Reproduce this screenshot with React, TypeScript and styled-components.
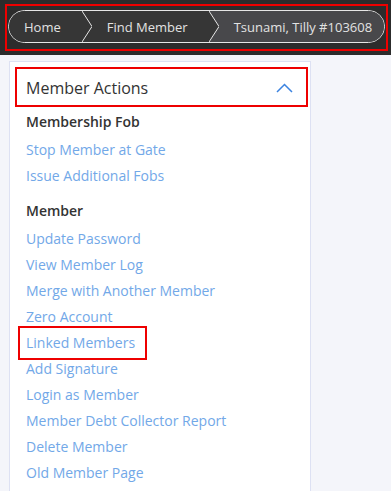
import { styled, createGlobalStyle } from "styled-components";

const GlobalStyle = createGlobalStyle`
  html, body {
    margin: 0;
    padding: 0;
    background: #f4f5fa;
    font-family: "Open Sans", "Noto Sans", sans-serif;
  }
`;

const crumbs = ["Home", "Find Member", "Tsunami, Tilly #103608"];

const sections = [
  {
    title: "Membership Fob",
    links: ["Stop Member at Gate", "Issue Additional Fobs"],
  },
  {
    title: "Member",
    links: [
      "Update Password",
      "View Member Log",
      "Merge with Another Member",
      "Zero Account",
      "Linked Members",
      "Add Signature",
      "Login as Member",
      "Member Debt Collector Report",
      "Delete Member",
      "Old Member Page",
    ],
  },
];

const highlighted = "Linked Members";

function Separator({ left, right }: { left: string; right: string }) {
  return (
    <SeparatorSvg width="10" height="31" viewBox="0 0 10 31">
      <rect x="0" y="0" width="10" height="31" fill={right} />
      <polygon points="0,0 10,15.5 0,31" fill={left} />
      <polyline points="0,0 10,15.5 0,31" fill="none" stroke="#e6e6e6" strokeWidth="1" />
    </SeparatorSvg>
  );
}

export default function App() {
  return (
    <>
      <GlobalStyle />
      <TopBar>
        <Marked>
          <Breadcrumb>
            {crumbs.map((c, i) => {
              const last = i === crumbs.length - 1;
              return (
                <Crumb key={c} $last={last}>
                  <CrumbLabel $last={last}>{c}</CrumbLabel>
                  {!last && (
                    <Separator
                      left="#363636"
                      right={i === crumbs.length - 2 ? "#48484b" : "#363636"}
                    />
                  )}
                </Crumb>
              );
            })}
          </Breadcrumb>
        </Marked>
      </TopBar>
      <Page>
        <Panel>
          <PanelHeader>
            <PanelTitle>Member Actions</PanelTitle>
            <svg width="17" height="10" viewBox="0 0 17 10">
              <polyline
                points="1,9 8.5,1.5 16,9"
                fill="none"
                stroke="#3b83e0"
                strokeWidth="1.5"
              />
            </svg>
          </PanelHeader>
          {sections.map((s, i) => (
            <Section key={s.title} $first={i === 0}>
              <SectionTitle>{s.title}</SectionTitle>
              {s.links.map((l) =>
                l === highlighted ? (
                  <HighlightLink key={l} href="#">
                    {l}
                  </HighlightLink>
                ) : (
                  <ActionLink key={l} href="#">
                    {l}
                  </ActionLink>
                )
              )}
            </Section>
          ))}
        </Panel>
      </Page>
    </>
  );
}

const TopBar = styled.div`
  height: 55px;
  box-sizing: border-box;
  background: #2c2c2c;
  padding: 4px 3px 4px 5px;
`;

const Marked = styled.div`
  height: 47px;
  box-sizing: border-box;
  border: 2px solid #ee0000;
  padding: 4px 1px 6px 1px;
`;

const Breadcrumb = styled.div`
  display: flex;
  height: 33px;
  box-sizing: border-box;
  border: 1px solid #e6e6e6;
  border-radius: 17px;
  overflow: hidden;
  background: #48484b;
`;

const Crumb = styled.div<{ $last: boolean }>`
  display: flex;
  align-items: stretch;
  flex: ${({ $last }) => ($last ? 1 : "none")};
  background: ${({ $last }) => ($last ? "#48484b" : "#363636")};
`;

const CrumbLabel = styled.span<{ $last: boolean }>`
  display: flex;
  align-items: center;
  padding: ${({ $last }) => ($last ? "0 0 0 15px" : "0 21px 0 15px")};
  color: #e2e2e2;
  font-size: 13px;
  white-space: nowrap;
`;

const SeparatorSvg = styled.svg`
  display: block;
  flex: none;
`;

const Page = styled.div`
  padding: 6px 0 0 9px;
`;

const Panel = styled.div`
  width: 302px;
  min-height: 440px;
  box-sizing: border-box;
  background: #ffffff;
  border: 1px solid #dde1f3;
  border-bottom: none;
  padding: 5px 2px 0 5px;
`;

const PanelHeader = styled.div`
  height: 40px;
  box-sizing: border-box;
  border: 2px solid #ee0000;
  display: flex;
  align-items: center;
  justify-content: space-between;
  padding: 1px 13px 0 9px;
`;

const PanelTitle = styled.span`
  font-size: 16px;
  color: #333333;
`;

const Section = styled.div<{ $first: boolean }>`
  display: flex;
  flex-direction: column;
  align-items: flex-start;
  padding-left: 11px;
  margin-top: ${({ $first }) => ($first ? "2px" : "9px")};
`;

const SectionTitle = styled.div`
  font-size: 14px;
  line-height: 26px;
  font-weight: 600;
  color: #333333;
  margin-bottom: 2px;
`;

const ActionLink = styled.a`
  font-size: 14px;
  line-height: 26px;
  color: #72a8e8;
  text-decoration: none;
  white-space: nowrap;
`;

const HighlightLink = styled(ActionLink)`
  border: 2px solid #ee0000;
  padding: 2px 10px 2px 6px;
  margin: -4px 0 -4px -8px;
`;
